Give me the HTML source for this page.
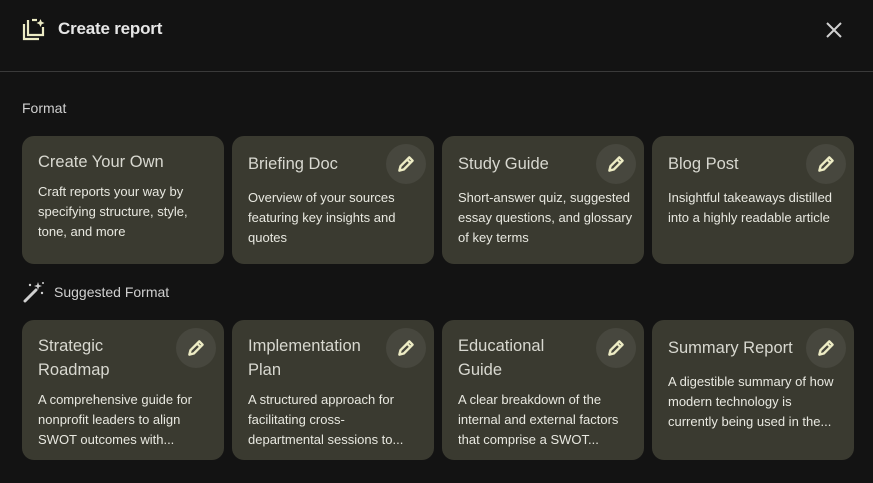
<!DOCTYPE html>
<html><head><style>
*{margin:0;padding:0;box-sizing:border-box}
body{width:873px;height:483px;background:#131313;font-family:"Liberation Sans",sans-serif;color:#e3e3e3;position:relative;overflow:hidden}
.hdr{position:absolute;left:58px;top:19px;font-size:17px;color:#e6e6e6;font-weight:bold;letter-spacing:-0.2px}
.div{position:absolute;left:0;top:71px;width:873px;height:1px;background:#3a3a3a}
.lab{position:absolute;font-size:14px;color:#d0d0d0}
.card{position:absolute;width:202px;background:#3a3a30;border-radius:12px;padding:0 16px;overflow:hidden}
.card h3{font-weight:normal;font-size:16.5px;color:#d8d8d0;line-height:24px;position:absolute;left:16px}
.card p{font-size:13px;color:#e8e8e0;line-height:20px;position:absolute;left:16px;top:0;white-space:nowrap}
.pen{position:absolute;right:8px;width:40px;height:40px;border-radius:50%;background:#47473e}
.pen svg{position:absolute;left:9px;top:9px}
</style></head><body>
<svg style="position:absolute;left:22px;top:18px" width="24" height="24" viewBox="0 0 24 24"><path d="M2 6v15h15" fill="none" stroke="#ecebc4" stroke-width="2.2"/><path d="M6 2v15h15V9" fill="none" stroke="#ecebc4" stroke-width="2.2"/><path d="M10 2h5" stroke="#ecebc4" stroke-width="2.2"/><path d="M18.5 1l1.2 2.8 2.8 1.2-2.8 1.2-1.2 2.8-1.2-2.8L14.5 5l2.8-1.2z" fill="#ecebc4"/></svg>
<div class="hdr">Create report</div>
<svg style="position:absolute;left:826px;top:22px" width="16" height="16" viewBox="0 0 16 16"><path d="M1 1l14 14M15 1L1 15" stroke="#d0d0d0" stroke-width="2"/></svg>
<div class="div"></div>
<div class="lab" style="left:22px;top:100px">Format</div>

<div class="card" style="left:22px;top:136px;height:128px"><h3 style="top:14px">Create Your Own</h3><p style="top:46px">Craft reports your way by<br>specifying structure, style,<br>tone, and more</p></div>
<div class="card" style="left:232px;top:136px;height:128px"><h3 style="top:16px">Briefing Doc</h3><div class="pen" style="top:8px"><svg width="22" height="22" viewBox="0 0 20 20"><path d="M4 16l1-4 8-8 3 3-8 8z" fill="none" stroke="#ecebc4" stroke-width="2.2" stroke-linejoin="round"/><path d="M11 6l3 3" stroke="#ecebc4" stroke-width="2"/></svg></div><p style="top:52px">Overview of your sources<br>featuring key insights and<br>quotes</p></div>
<div class="card" style="left:442px;top:136px;height:128px"><h3 style="top:16px">Study Guide</h3><div class="pen" style="top:8px"><svg width="22" height="22" viewBox="0 0 20 20"><path d="M4 16l1-4 8-8 3 3-8 8z" fill="none" stroke="#ecebc4" stroke-width="2.2" stroke-linejoin="round"/><path d="M11 6l3 3" stroke="#ecebc4" stroke-width="2"/></svg></div><p style="top:52px">Short-answer quiz, suggested<br>essay questions, and glossary<br>of key terms</p></div>
<div class="card" style="left:652px;top:136px;height:128px"><h3 style="top:16px">Blog Post</h3><div class="pen" style="top:8px"><svg width="22" height="22" viewBox="0 0 20 20"><path d="M4 16l1-4 8-8 3 3-8 8z" fill="none" stroke="#ecebc4" stroke-width="2.2" stroke-linejoin="round"/><path d="M11 6l3 3" stroke="#ecebc4" stroke-width="2"/></svg></div><p style="top:52px">Insightful takeaways distilled<br>into a highly readable article</p></div>

<svg style="position:absolute;left:23px;top:281px" width="22" height="22" viewBox="0 0 22 22"><path d="M2 20L13 9" stroke="#d0d0d0" stroke-width="3" stroke-linecap="round"/><path d="M15 1l1 3 3 1-3 1-1 3-1-3-3-1 3-1z" fill="#d0d0d0"/><circle cx="7" cy="4" r="1.2" fill="#d0d0d0"/><circle cx="19" cy="12" r="1.2" fill="#d0d0d0"/><circle cx="20" cy="2" r="1" fill="#d0d0d0"/></svg>
<div class="lab" style="left:54px;top:284px">Suggested Format</div>

<div class="card" style="left:22px;top:320px;height:140px"><h3 style="top:14px">Strategic<br>Roadmap</h3><div class="pen" style="top:8px"><svg width="22" height="22" viewBox="0 0 20 20"><path d="M4 16l1-4 8-8 3 3-8 8z" fill="none" stroke="#ecebc4" stroke-width="2.2" stroke-linejoin="round"/><path d="M11 6l3 3" stroke="#ecebc4" stroke-width="2"/></svg></div><p style="top:70px">A comprehensive guide for<br>nonprofit leaders to align<br>SWOT outcomes with...</p></div>
<div class="card" style="left:232px;top:320px;height:140px"><h3 style="top:14px">Implementation<br>Plan</h3><div class="pen" style="top:8px"><svg width="22" height="22" viewBox="0 0 20 20"><path d="M4 16l1-4 8-8 3 3-8 8z" fill="none" stroke="#ecebc4" stroke-width="2.2" stroke-linejoin="round"/><path d="M11 6l3 3" stroke="#ecebc4" stroke-width="2"/></svg></div><p style="top:70px">A structured approach for<br>facilitating cross-<br>departmental sessions to...</p></div>
<div class="card" style="left:442px;top:320px;height:140px"><h3 style="top:14px">Educational<br>Guide</h3><div class="pen" style="top:8px"><svg width="22" height="22" viewBox="0 0 20 20"><path d="M4 16l1-4 8-8 3 3-8 8z" fill="none" stroke="#ecebc4" stroke-width="2.2" stroke-linejoin="round"/><path d="M11 6l3 3" stroke="#ecebc4" stroke-width="2"/></svg></div><p style="top:70px">A clear breakdown of the<br>internal and external factors<br>that comprise a SWOT...</p></div>
<div class="card" style="left:652px;top:320px;height:140px"><h3 style="top:16px">Summary Report</h3><div class="pen" style="top:8px"><svg width="22" height="22" viewBox="0 0 20 20"><path d="M4 16l1-4 8-8 3 3-8 8z" fill="none" stroke="#ecebc4" stroke-width="2.2" stroke-linejoin="round"/><path d="M11 6l3 3" stroke="#ecebc4" stroke-width="2"/></svg></div><p style="top:52px">A digestible summary of how<br>modern technology is<br>currently being used in the...</p></div>
</body></html>
